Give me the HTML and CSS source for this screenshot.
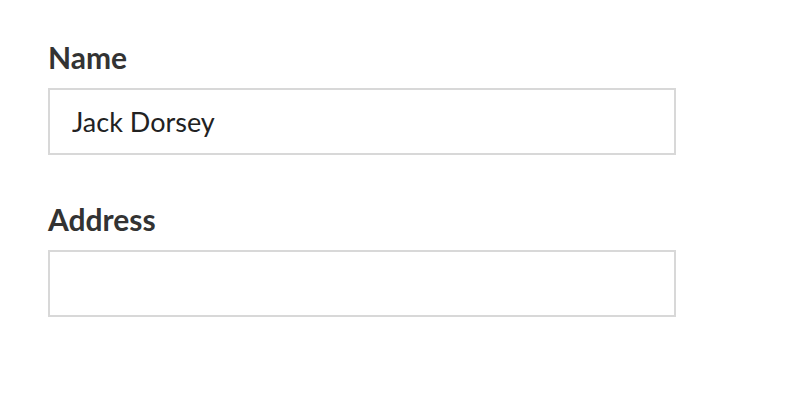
FILE: index.html
```html
<!DOCTYPE html>
<html>
<head>
<meta charset="utf-8">
<link rel="stylesheet" href="styles.css">
</head>
<body>
<form class="form">
  <div class="field">
    <label class="label" for="name">Name</label>
    <input class="input" id="name" type="text" value="Jack Dorsey">
  </div>
  <div class="field">
    <label class="label" for="address">Address</label>
    <input class="input" id="address" type="text" value="">
  </div>
</form>
</body>
</html>
```
FILE: styles.css
```css
html, body {
  margin: 0;
  padding: 0;
  background: #ffffff;
}
body {
  font-family: Lato, "Open Sans", sans-serif;
  color: #333333;
}
.form {
  padding: 39px 0 0 48px;
  display: flex;
  flex-direction: column;
  gap: 46px;
}
.field {
  display: flex;
  flex-direction: column;
  gap: 13px;
}
.label {
  font-weight: 700;
  font-size: 30px;
  line-height: 36px;
  color: #333333;
}
.input {
  box-sizing: border-box;
  width: 628px;
  height: 67px;
  margin: 0;
  padding: 0 22px;
  border: 2px solid #d8d8d8;
  border-radius: 0;
  background: #fff;
  font-family: Lato, "Open Sans", sans-serif;
  font-size: 27px;
  color: #222222;
  outline: none;
}
```
